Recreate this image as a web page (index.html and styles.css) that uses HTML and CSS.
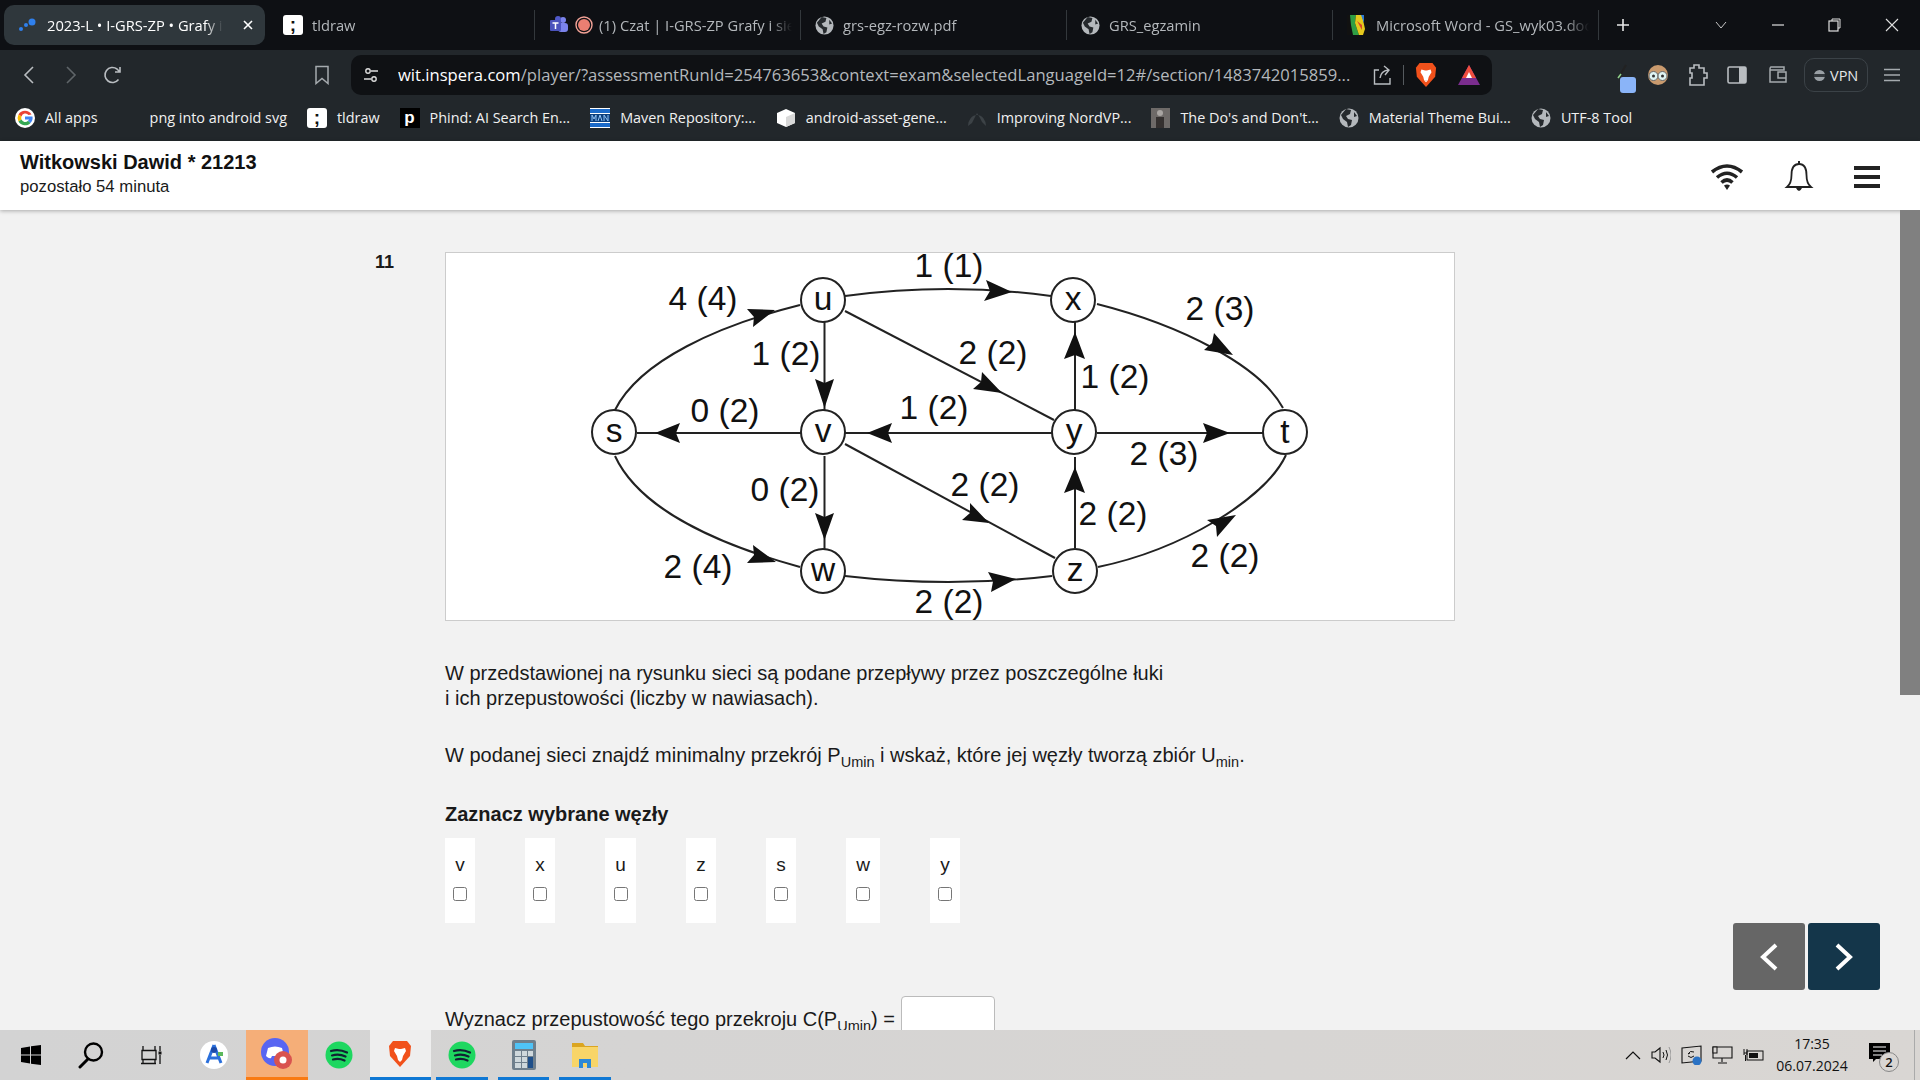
FILE: index.html
```html
<!DOCTYPE html>
<html lang="pl">
<head>
    <meta charset="UTF-8">
    <meta name="viewport" content="width=device-width, initial-scale=1.0">
    <title>Inspera player</title>
    <link rel="stylesheet" href="styles.css">
</head>
<body>
    <svg class="defs" width="0" height="0">
        <symbol id="globe" viewBox="0 0 20 20">
            <circle cx="10" cy="10" r="9.5" fill="#b4b8bc"/>
            <path d="M7 1 L12 2 L11 6 L7 8 L9 11 L13 12 L12 17 L9 19 L8 14 L4 11 L2 7 Z" fill="#25292d"/>
            <path d="M15 4 L18 8 L15 9 Z" fill="#25292d"/>
        </symbol>
        <symbol id="spotify" viewBox="0 0 28 28">
            <ellipse cx="14" cy="14" rx="13.5" ry="13.5" fill="#1ed760"/>
            <path d="M6 10 Q14 7.5 22 11.5 M7 14.5 Q14 12.5 20.5 15.5 M8 18.5 Q14 17 19.5 19.5" fill="none" stroke="#123" stroke-width="2.2" stroke-linecap="round"/>
        </symbol>
        <symbol id="brave" viewBox="0 0 24 28">
            <path d="M5 1 H19 L23 6 L22 16 L12 27 L2 16 L1 6 Z" fill="#f1511b"/>
            <path d="M7 8 L11 9 H13 L17 8 L18 11 L15 16 L14 20 H10 L9 16 L6 11 Z" fill="#fff"/>
            <path d="M10 20 L12 22 L14 20 Z" fill="#fff"/>
        </symbol>
    </svg>

    <div class="tabstrip">
        <div class="tab tab-active">
            <svg class="fav" width="18" height="18" viewBox="0 0 18 18"><circle cx="3" cy="13" r="2" fill="#2f80ed"/><circle cx="8" cy="9" r="2" fill="#2f80ed"/><circle cx="14" cy="6" r="3.5" fill="#2f80ed"/></svg>
            <span class="tab-title">2023-L • I-GRS-ZP • Grafy i sieci</span>
            <svg class="tab-close" width="12" height="12" viewBox="0 0 12 12"><path d="M2 2 L10 10 M10 2 L2 10" stroke="#fff" stroke-width="1.6"/></svg>
        </div>
        <div class="tab">
            <span class="fav fav-tldraw">;</span>
            <span class="tab-title">tldraw</span>
        </div>
        <div class="tab tab-tight">
            <svg class="fav" width="20" height="20" viewBox="0 0 20 20"><circle cx="14" cy="5" r="3" fill="#7b83eb"/><rect x="9" y="8" width="10" height="9" rx="3" fill="#7b83eb"/><circle cx="9" cy="4" r="3" fill="#5059c9"/><rect x="1" y="5" width="11" height="11" rx="1" fill="#4b53bc"/><path d="M3.5 8 H9.5 M6.5 8 V14" stroke="#fff" stroke-width="1.5"/></svg>
            <svg class="fav" width="18" height="18" viewBox="0 0 18 18"><circle cx="9" cy="9" r="8" fill="none" stroke="#f2a297" stroke-width="1.4"/><circle cx="9" cy="9" r="6" fill="#ea7f72"/></svg>
            <span class="tab-title">(1) Czat | I-GRS-ZP Grafy i sieci</span>
        </div>
        <div class="tab">
            <svg class="fav" width="19" height="19"><use href="#globe"/></svg>
            <span class="tab-title">grs-egz-rozw.pdf</span>
        </div>
        <div class="tab">
            <svg class="fav" width="19" height="19"><use href="#globe"/></svg>
            <span class="tab-title">GRS_egzamin</span>
        </div>
        <div class="tab">
            <svg class="fav" width="20" height="20" viewBox="0 0 20 20"><rect width="20" height="20" fill="#111"/><path d="M3 0 H9 L8 8 L12 20 H6 L4 10 Z" fill="#2f9e44"/><path d="M9 0 H15 L18 14 L16 20 H12 L8 8 Z" fill="#e5c81d"/><path d="M14 0 H17 L17 8 Z" fill="#2c7bd6"/><path d="M10 6 L15 10 L15 15 Z" fill="#d9442c"/></svg>
            <span class="tab-title">Microsoft Word - GS_wyk03.doc</span>
        </div>
        <svg class="new-tab" width="16" height="16" viewBox="0 0 16 16"><path d="M8 2 V14 M2 8 H14" stroke="#e8e8e8" stroke-width="1.6"/></svg>
        <div class="win-controls">
            <div class="win-btn"><svg width="12" height="8" viewBox="0 0 12 8"><path d="M1 1 L6 7 L11 1" fill="none" stroke="#c8c8c8"/></svg></div>
            <div class="win-btn"><svg width="12" height="12" viewBox="0 0 12 12"><path d="M0 6 H12" stroke="#e0e0e0" stroke-width="1.2"/></svg></div>
            <div class="win-btn"><svg width="13" height="14" viewBox="0 0 13 14"><rect x="1" y="3" width="9" height="10" fill="none" stroke="#e0e0e0" stroke-width="1.2"/><path d="M4 3 V1 H12 V10 H10" fill="none" stroke="#e0e0e0"/></svg></div>
            <div class="win-btn"><svg width="14" height="14" viewBox="0 0 14 14"><path d="M1 1 L13 13 M13 1 L1 13" stroke="#e0e0e0" stroke-width="1.1"/></svg></div>
        </div>
    </div>

    <div class="toolbar">
        <div class="nav-tools">
            <div class="tool"><svg width="12" height="20" viewBox="0 0 12 20"><path d="M10 2 L2 10 L10 18" fill="none" stroke="#b9bdc1" stroke-width="1.6"/></svg></div>
            <div class="tool"><svg width="12" height="20" viewBox="0 0 12 20"><path d="M2 2 L10 10 L2 18" fill="none" stroke="#5f6569" stroke-width="1.6"/></svg></div>
            <div class="tool"><svg width="20" height="20" viewBox="0 0 20 20"><path d="M15.5 14.5 A7.5 7.5 0 1 1 14 4 L17 7 M17 2 V7 H12" fill="none" stroke="#b9bdc1" stroke-width="1.6"/></svg></div>
            <div class="tool tool-end"><svg width="16" height="20" viewBox="0 0 16 20"><path d="M2 1.500 H14 V18.500 L8 13.500 L2 18.500 Z" fill="none" stroke="#a5aaae" stroke-width="1.5"/></svg></div>
        </div>
        <div class="urlbar">
            <svg class="url-tune" width="16" height="16" viewBox="0 0 16 16"><circle cx="5" cy="4" r="2.200" fill="none" stroke="#ddd" stroke-width="1.400"/><path d="M8 4 H15 M1 12 H8" stroke="#ddd" stroke-width="1.400"/><circle cx="11" cy="12" r="2.200" fill="none" stroke="#ddd" stroke-width="1.400"/></svg>
            <span class="url-text"><span class="url-host">wit.inspera.com</span>/player/?assessmentRunId=254763653&amp;context=exam&amp;selectedLanguageId=12#/section/1483742015859...</span>
            <svg class="url-share" width="20" height="22" viewBox="0 0 20 22"><path d="M6 6 H1.500 V20 H17 V14 M7 14 Q8 7 15 6 M11 2 L16 6 L12 11" fill="none" stroke="#b9bdc1" stroke-width="1.400"/></svg>
            <span class="url-sep"></span>
            <svg class="url-brave" width="22" height="26"><use href="#brave"/></svg>
            <svg class="url-triangle" width="24" height="22" viewBox="0 0 24 22"><path d="M12 1 L23 21 H1 Z" fill="#7b2d8e"/><path d="M12 1 L19 14 H5 Z" fill="#f04e3e"/><path d="M12 8 L15 14 H9 Z" fill="#fff"/></svg>
        </div>
        <div class="ext-tools">
            <svg class="ext-pen" width="22" height="30" viewBox="0 0 22 30"><path d="M4 14 L11 2" stroke="#222" stroke-width="2"/><path d="M3 15 L6 11" stroke="#8fd18a" stroke-width="1.500"/><rect x="5" y="14" width="16" height="16" rx="3" fill="#8ab4f8"/></svg>
            <svg class="ext-face" width="22" height="24" viewBox="0 0 22 24"><circle cx="11" cy="12" r="10" fill="#c99a6e"/><circle cx="6.500" cy="13" r="4.500" fill="#dff3f2" stroke="#666"/><circle cx="15.500" cy="13" r="4.500" fill="#dff3f2" stroke="#666"/><circle cx="6.500" cy="13" r="1.500" fill="#333"/><circle cx="15.500" cy="13" r="1.500" fill="#333"/></svg>
            <svg class="ext-puzzle" width="22" height="24" viewBox="0 0 22 24"><path d="M4 5 H8 V2 H13 V5 H18 V10 H21 V15 H18 V22 H4 V15 H6 V10 H4 Z" fill="none" stroke="#b9bdc1" stroke-width="1.600"/></svg>
            <svg class="ext-side" width="20" height="20" viewBox="0 0 20 20"><rect x="1" y="2" width="18" height="16" rx="1.500" fill="none" stroke="#b9bdc1" stroke-width="1.600"/><rect x="12" y="2" width="7" height="16" fill="#b9bdc1"/></svg>
            <svg class="ext-wallet" width="20" height="20" viewBox="0 0 20 20"><path d="M2 5 H16 V2 H3 Q2 2 2 5 V17 H18 V7 H10 V13 H18" fill="none" stroke="#a5aaae" stroke-width="1.500"/></svg>
            <div class="vpn"><span class="vpn-dot"></span>VPN</div>
            <svg class="ext-menu" width="18" height="14" viewBox="0 0 18 14"><path d="M1 1.500 H17 M1 7 H17 M1 12.500 H17" stroke="#a5aaae" stroke-width="1.500"/></svg>
        </div>
    </div>

    <div class="bookmarks">
        <div class="bm">
            <svg class="bm-icon" width="20" height="20" viewBox="0 0 20 20"><circle cx="10" cy="10" r="10" fill="#fff"/><path d="M16.500 6.500 A7.500 7.500 0 0 0 3.500 6.500 L6.500 8.500 A4 4 0 0 1 13.500 7 Z" fill="#ea4335"/><path d="M3.500 6.500 A7.500 7.500 0 0 0 3.500 13.500 L6.500 11.500 A4 4 0 0 1 6.500 8.500 Z" fill="#fbbc05"/><path d="M3.500 13.500 A7.500 7.500 0 0 0 15.500 15 L13 12.800 A4 4 0 0 1 6.500 11.500 Z" fill="#34a853"/><path d="M10 8.500 H17.500 A7.500 7.500 0 0 1 15.500 15 L13 12.800 Q13.800 12 14 11.500 H10 Z" fill="#4285f4"/></svg>
            <span>All apps</span>
        </div>
        <div class="bm"><span class="bm-blank"></span><span>png into android svg</span></div>
        <div class="bm"><span class="bm-icon fav-tldraw">;</span><span>tldraw</span></div>
        <div class="bm"><span class="bm-icon fav-phind">p</span><span>Phind: AI Search En...</span></div>
        <div class="bm">
            <svg class="bm-icon" width="20" height="20" viewBox="0 0 20 20"><rect width="20" height="20" fill="#fff"/><rect y="1" width="20" height="4" fill="#1b6ac9"/><rect y="15" width="20" height="4" fill="#1b6ac9"/><rect y="6" width="20" height="8" fill="#0c3f7d"/><path d="M2 13 V7 L4 11 L6 7 V13 M8 13 L10 7 L12 13 M14 13 V7 L18 13 V7" stroke="#8fc1f5" fill="none"/></svg>
            <span>Maven Repository:...</span>
        </div>
        <div class="bm">
            <svg class="bm-icon" width="20" height="20" viewBox="0 0 20 20"><path d="M10 1 L19 5 V15 L10 19 L1 15 V5 Z" fill="#fff"/><path d="M10 9 L19 5 V15 L10 19 Z" fill="#d8d8d8"/></svg>
            <span>android-asset-gene...</span>
        </div>
        <div class="bm">
            <svg class="bm-icon" width="20" height="20" viewBox="0 0 20 20"><path d="M1 18 A9 11 0 0 1 19 18 L15 14 L13 10 L10 5 L7 11 L5 15 Z" fill="#3c4246"/></svg>
            <span>Improving NordVP...</span>
        </div>
        <div class="bm">
            <svg class="bm-icon" width="19" height="20" viewBox="0 0 19 20"><rect width="19" height="20" fill="#6e6a68"/><circle cx="9" cy="5" r="3" fill="#a9a5a2"/><rect x="5" y="9" width="8" height="11" fill="#34302f"/></svg>
            <span>The Do's and Don't...</span>
        </div>
        <div class="bm"><svg class="bm-icon" width="20" height="20"><use href="#globe"/></svg><span>Material Theme Bui...</span></div>
        <div class="bm"><svg class="bm-icon" width="20" height="20"><use href="#globe"/></svg><span>UTF-8 Tool</span></div>
    </div>

    <div class="app">
        <header class="app-header">
            <div>
                <div class="student">Witkowski Dawid * 21213</div>
                <div class="time-left">pozostało 54 minuta</div>
            </div>
            <div class="header-icons">
                <svg width="34" height="28" viewBox="0 0 34 28"><path d="M2 9 Q17 -3 32 9 M7 14.500 Q17 6 27 14.500 M11.500 19.500 Q17 14.500 22.500 19.500" fill="none" stroke="#222" stroke-width="3.600"/><path d="M14 22.500 L17 27 L20 22.500 Q17 20.500 14 22.500 Z" fill="#222"/></svg>
                <svg width="30" height="32" viewBox="0 0 30 32"><path d="M15 3 C9 3 7.500 9 7.500 14 C7.500 20 5.500 24 3 26 H27 C24.500 24 22.500 20 22.500 14 C22.500 9 21 3 15 3 Z" fill="none" stroke="#222" stroke-width="1.800"/><path d="M15 0 V3" stroke="#222" stroke-width="2"/><path d="M12 27 Q15 33 18 27 Z" fill="#222"/></svg>
                <svg width="26" height="24" viewBox="0 0 26 24"><path d="M0 3 H26 M0 12 H26 M0 21 H26" stroke="#222" stroke-width="4.200"/></svg>
            </div>
        </header>

        <div class="workspace">
            <main class="question">
                <div class="question-number">11</div>
                <div class="question-body">
                    <div class="figure">
                        <svg class="graph" width="1008" height="367" viewBox="446 253 1008 367">
                            <g fill="none" stroke="#222" stroke-width="2">
                                <path d="M615 410 C 640 360, 720 325, 800 305"/>
                                <path d="M845 296 Q 948 282 1051 296"/>
                                <path d="M1097 304 C 1180 325, 1260 365, 1283 408"/>
                                <path d="M615 456 C 640 510, 720 545, 800 567"/>
                                <path d="M845 576 Q 948 588 1052 576"/>
                                <path d="M1098 567 C 1180 550, 1265 500, 1286 455"/>
                                <path d="M824.500 322 V410"/>
                                <path d="M824.500 456 V550"/>
                                <path d="M637 433 H802"/>
                                <path d="M845 433 H1052"/>
                                <path d="M1097 433 H1263"/>
                                <path d="M1075 411 V322"/>
                                <path d="M1075 548 V457"/>
                                <path d="M845 311 L1054 420"/>
                                <path d="M845 444 L1055 558"/>
                            </g>
                            <g fill="#111">
                                <path d="M775 310 L747 309 L754 317 L753 327 Z"/>
                                <path d="M1012 292 L986 280 L990 291 L984 301 Z"/>
                                <path d="M1233 355 L1214 333 L1212 343 L1204 350 Z"/>
                                <path d="M776 562 L753 545 L754 555 L747 563 Z"/>
                                <path d="M1016 579 L988 572 L993 581.500 L991 592 Z"/>
                                <path d="M1236 515 L1207 520 L1216 526 L1217 537 Z"/>
                                <path d="M824.500 408 L815 379 L824.500 383 L834 379 Z"/>
                                <path d="M824.500 540 L815 513 L824.500 517 L834 513 Z"/>
                                <path d="M655 433 L680 423 L676 433 L680 443 Z"/>
                                <path d="M867 433 L892 423 L888 433 L892 443 Z"/>
                                <path d="M1230 433 L1203 423 L1207 433 L1203 443 Z"/>
                                <path d="M1075 332 L1064 359 L1075 355 L1085 359 Z"/>
                                <path d="M1075 467 L1064 493 L1075 489 L1085 493 Z"/>
                                <path d="M1002 393 L982 372 L981 382 L973 389 Z"/>
                                <path d="M989 523 L970 503 L970 513 L962 520 Z"/>
                            </g>
                            <g fill="#fff" stroke="#222" stroke-width="2">
                                <circle cx="823" cy="300" r="22"/>
                                <circle cx="1073" cy="300" r="22"/>
                                <circle cx="614" cy="432" r="22"/>
                                <circle cx="823" cy="432" r="22"/>
                                <circle cx="1074" cy="432" r="22"/>
                                <circle cx="1285" cy="432" r="22"/>
                                <circle cx="823" cy="571" r="22"/>
                                <circle cx="1075" cy="571" r="22"/>
                            </g>
                            <g class="graph-nodes" text-anchor="middle">
                                <text x="823" y="310">u</text>
                                <text x="1073" y="310">x</text>
                                <text x="614" y="442">s</text>
                                <text x="823" y="442">v</text>
                                <text x="1074" y="442">y</text>
                                <text x="1285" y="443">t</text>
                                <text x="823" y="581">w</text>
                                <text x="1075" y="581">z</text>
                            </g>
                            <g class="graph-labels" text-anchor="middle">
                                <text x="949" y="277">1 (1)</text>
                                <text x="703" y="310">4 (4)</text>
                                <text x="1220" y="320">2 (3)</text>
                                <text x="786" y="365">1 (2)</text>
                                <text x="993" y="364">2 (2)</text>
                                <text x="1115" y="388">1 (2)</text>
                                <text x="725" y="422">0 (2)</text>
                                <text x="934" y="419">1 (2)</text>
                                <text x="1164" y="465">2 (3)</text>
                                <text x="785" y="501">0 (2)</text>
                                <text x="985" y="496">2 (2)</text>
                                <text x="1113" y="525">2 (2)</text>
                                <text x="698" y="578">2 (4)</text>
                                <text x="1225" y="567">2 (2)</text>
                                <text x="949" y="613">2 (2)</text>
                            </g>
                        </svg>
                    </div>

                    <p class="intro">W przedstawionej na rysunku sieci są podane przepływy przez poszczególne łuki<br>i ich przepustowości (liczby w nawiasach).</p>
                    <p class="instruction">W podanej sieci znajdź minimalny przekrój P<sub>Umin</sub> i wskaż, które jej węzły tworzą zbiór U<sub>min</sub>.</p>
                    <h3 class="pick-title">Zaznacz wybrane węzły</h3>
                    <div class="options">
                        <label class="option">v<input type="checkbox"></label>
                        <label class="option">x<input type="checkbox"></label>
                        <label class="option option-mid">u<input type="checkbox"></label>
                        <label class="option">z<input type="checkbox"></label>
                        <label class="option">s<input type="checkbox"></label>
                        <label class="option option-wide">w<input type="checkbox"></label>
                        <label class="option">y<input type="checkbox"></label>
                    </div>
                    <div class="capacity">
                        <span class="capacity-text">Wyznacz przepustowość tego przekroju C(P<sub>Umin</sub>) =</span>
                        <input class="capacity-input" type="text">
                    </div>
                </div>
            </main>
            <div class="scrollbar"><div class="scroll-thumb"></div></div>
            <div class="pager">
                <button class="pager-btn pager-prev"><svg width="22" height="30" viewBox="0 0 22 30"><path d="M18 3 L5 15 L18 27" fill="none" stroke="#fff" stroke-width="4"/></svg></button>
                <button class="pager-btn pager-next"><svg width="22" height="30" viewBox="0 0 22 30"><path d="M4 3 L17 15 L4 27" fill="none" stroke="#fff" stroke-width="4"/></svg></button>
            </div>
        </div>
    </div>

    <footer class="taskbar">
        <div class="task"><svg width="20" height="20" viewBox="0 0 20 20"><path d="M0 3 L9 1.500 V9.500 H0 Z M10 1.300 L20 0 V9.500 H10 Z M0 10.500 H9 V18.500 L0 17 Z M10 10.500 H20 V20 L10 18.700 Z" fill="#000"/></svg></div>
        <div class="task"><svg width="28" height="28" viewBox="0 0 28 28"><circle cx="16.500" cy="11" r="8.500" fill="none" stroke="#000" stroke-width="2.400"/><path d="M11 18 L3 26" stroke="#000" stroke-width="3" stroke-linecap="round"/></svg></div>
        <div class="task"><svg width="22" height="20" viewBox="0 0 22 20"><path d="M2 1 V5 M14 1 V5 M2 15 V19 M14 15 V19 M1 5.500 H15 V14.500 H1 Z M0 18.500 H15 M19 1 V6 M19 10 V19" fill="none" stroke="#111" stroke-width="1.300"/><rect x="17.500" y="6.500" width="3" height="3" fill="#111"/></svg></div>
        <div class="task"><svg width="30" height="30" viewBox="0 0 30 30"><circle cx="15" cy="15" r="14" fill="#fff"/><path d="M15 5 L8 23 M15 5 L22 23 M10 18 H20" stroke="#2a6fdb" stroke-width="3"/><circle cx="15" cy="10" r="3" fill="#1c4aa8"/><rect x="19" y="12" width="5" height="4" fill="#5cb85c"/></svg></div>
        <div class="task task-alert">
            <svg width="32" height="32" viewBox="0 0 32 32"><ellipse cx="14" cy="14" rx="14" ry="14" fill="#5865f2"/><path d="M7 10 Q14 7 21 10 L23 18 Q20 21 18 20 L17 18 H11 L10 20 Q8 21 5 18 Z" fill="#fff"/><circle cx="22" cy="22" r="9" fill="#d9534f"/><circle cx="22" cy="22" r="3.500" fill="#fff"/></svg>
        </div>
        <div class="task"><svg width="28" height="30"><use href="#spotify"/></svg></div>
        <div class="task task-active"><svg width="24" height="30"><use href="#brave"/></svg></div>
        <div class="task task-open"><svg width="28" height="30"><use href="#spotify"/></svg></div>
        <div class="task task-open">
            <svg width="24" height="30" viewBox="0 0 24 30"><rect width="24" height="30" rx="2" fill="#6f7f8c"/><rect x="3" y="3" width="18" height="6" fill="#4fc3f7"/><path d="M3 11 H9 V16 H3 Z M10 11 H15 V16 H10 Z M16 11 H21 V16 H16 Z M3 17 H9 V22 H3 Z M10 17 H15 V22 H10 Z M3 23 H9 V28 H3 Z M10 23 H15 V28 H10 Z" fill="#cfd8dc"/><rect x="16" y="17" width="5" height="11" fill="#1e4f8a"/></svg>
        </div>
        <div class="task task-open">
            <svg width="28" height="28" viewBox="0 0 28 28"><path d="M1 2 H12 L14 5 H27 V26 H1 Z" fill="#dba520"/><rect x="1" y="6" width="26" height="20" fill="#f8d568"/><path d="M8 27 V18 H20 V27 H16 V22 H12 V27 Z" fill="#2b88d8"/></svg>
        </div>

        <div class="tray">
            <svg class="tray-icon" width="16" height="10" viewBox="0 0 16 10"><path d="M1 9 L8 2 L15 9" fill="none" stroke="#111" stroke-width="1.200"/></svg>
            <svg class="tray-icon" width="20" height="18" viewBox="0 0 20 18"><path d="M1 6 H4 L9 2 V16 L4 12 H1 Z" fill="none" stroke="#111" stroke-width="1.100"/><path d="M12 6 Q14 9 12 12" fill="none" stroke="#111"/><path d="M15 4 Q18 9 15 14" fill="none" stroke="#111"/><path d="M18 1 Q22 9 18 17" fill="none" stroke="#999"/></svg>
            <svg class="tray-icon" width="21" height="20" viewBox="0 0 21 20"><path d="M1 3 L20 1 V16 L1 18 Z" fill="none" stroke="#111" stroke-width="1.100"/><path d="M13 7 Q9 5 7 9 L9 8 M7 11 Q10 14 13 11" fill="none" stroke="#111"/><circle cx="16" cy="16" r="4.500" fill="#2a72c4"/></svg>
            <svg class="tray-icon" width="21" height="18" viewBox="0 0 21 18"><path d="M1 1 H20 V12 H1 Z M10 12 V16 M6 17 H15" fill="none" stroke="#111" stroke-width="1.100"/><rect x="1" y="1" width="4" height="6" fill="#d9d6d3" stroke="#111"/></svg>
            <svg class="tray-icon" width="21" height="16" viewBox="0 0 21 16"><rect x="4" y="4" width="16" height="9" fill="none" stroke="#111"/><rect x="6" y="6" width="9" height="5" fill="#111"/><path d="M1 2 V8 M4 2 V8 M1 6 H4 M2.500 8 V14" stroke="#111"/></svg>
            <div class="clock"><div>17:35</div><div>06.07.2024</div></div>
            <div class="notify">
                <svg width="21" height="19" viewBox="0 0 21 19"><path d="M0 0 H21 V16 H7 L4 19 V16 H0 Z" fill="#000"/><path d="M4 4 H17 M4 8 H17 M4 12 H13" stroke="#fff"/></svg>
                <span class="notify-count">2</span>
            </div>
        </div>
    </footer>
</body>
</html>
```

FILE: styles.css
```css
* {
    box-sizing: border-box;
}

html, body {
    margin: 0;
    height: 100%;
}

body {
    display: flex;
    flex-direction: column;
    height: 1080px;
    overflow: hidden;
    font-family: "Liberation Sans", Arial, sans-serif;
    color: #1a1a1a;
    background-color: #f2f2f2;
}

.defs {
    position: absolute;
}

/* browser chrome */
.tabstrip {
    display: flex;
    align-items: center;
    flex: 0 0 50px;
    padding-left: 4px;
    background-color: #0e1014;
    font-family: "Open Sans", sans-serif;
    font-size: 14.7px;
    color: #b4b8bc;
}

.tab {
    display: flex;
    align-items: center;
    flex: 0 0 266px;
    height: 30px;
    padding-left: 14px;
    gap: 9px;
    border-right: 1px solid #33383c;
    overflow: hidden;
}

.tab-tight {
    gap: 6px;
}

.tab-active {
    flex-basis: 261px;
    height: 40px;
    margin-right: 4px;
    border: none;
    border-radius: 10px;
    background-color: #2f373c;
    color: #fff;
}

.fav {
    flex: none;
}

.tab-title {
    flex: 1;
    padding-right: 10px;
    white-space: nowrap;
    overflow: hidden;
    -webkit-mask-image: linear-gradient(to right, #000 85%, transparent 96%);
    mask-image: linear-gradient(to right, #000 85%, transparent 96%);
}

.tab-active .tab-title {
    flex: none;
    width: 176px;
    margin-left: 2px;
    padding-right: 0;
    -webkit-mask-image: linear-gradient(to right, #000 90%, transparent);
    mask-image: linear-gradient(to right, #000 90%, transparent);
}

.tab-close {
    flex: none;
    margin-left: 10px;
}

.fav-tldraw {
    display: flex;
    align-items: center;
    justify-content: center;
    width: 20px;
    height: 20px;
    border-radius: 3px;
    background-color: #fff;
    color: #111;
    font-family: "Liberation Sans", sans-serif;
    font-size: 19px;
    font-weight: bold;
}

.new-tab {
    margin-left: 16px;
}

.win-controls {
    display: flex;
    margin-left: auto;
}

.win-btn {
    display: flex;
    align-items: center;
    justify-content: center;
    width: 57px;
    height: 40px;
}

.toolbar {
    display: flex;
    align-items: center;
    flex: 0 0 50px;
    padding-left: 8px;
    background-color: #22272b;
}

.nav-tools {
    display: flex;
    width: 343px;
}

.tool {
    display: flex;
    align-items: center;
    justify-content: center;
    width: 42px;
    height: 40px;
}

.tool-end {
    margin-left: auto;
    margin-right: 8px;
}

.urlbar {
    display: flex;
    align-items: center;
    flex: 0 0 1141px;
    height: 40px;
    padding-left: 12px;
    border-radius: 10px;
    background-color: #0f1114;
    font-family: "Open Sans", sans-serif;
    font-size: 16.6px;
    color: #b4b8bc;
}

.url-text {
    flex: 0 0 966px;
    margin: 0 0 2px 19px;
    white-space: nowrap;
    overflow: hidden;
}

.url-host {
    color: #fff;
}

.url-share {
    margin-left: 9px;
}

.url-sep {
    width: 1px;
    height: 20px;
    margin-left: 10px;
    background-color: #555a5e;
}

.url-brave {
    margin-left: 11px;
}

.url-triangle {
    margin-left: 20px;
}

.ext-tools {
    display: flex;
    align-items: center;
    margin-left: auto;
    padding-right: 19px;
}

.ext-pen {
    margin-top: 5px;
}

.ext-face {
    margin-left: 10px;
}

.ext-puzzle {
    margin-left: 17px;
}

.ext-side {
    margin-left: 19px;
}

.ext-wallet {
    margin-left: 21px;
}

.vpn {
    display: flex;
    align-items: center;
    gap: 5px;
    width: 64px;
    height: 34px;
    margin-left: 16px;
    padding-left: 9px;
    border: 1px solid #3b4247;
    border-radius: 10px;
    font-family: "Open Sans", sans-serif;
    font-size: 14.5px;
    color: #e4e6e8;
}

.vpn-dot {
    flex: none;
    width: 11px;
    height: 11px;
    border-radius: 50%;
    background: linear-gradient(#9aa0a5 40%, #33383c 40%, #33383c 60%, #9aa0a5 60%);
}

.ext-menu {
    margin-left: 15px;
}

.bookmarks {
    display: flex;
    align-items: center;
    flex: 0 0 41px;
    padding: 0 0 6px 15px;
    gap: 20px;
    background-color: #22272b;
    font-family: "Open Sans", sans-serif;
    font-size: 14.4px;
    color: #f1f1f1;
}

.bm {
    display: flex;
    align-items: center;
    gap: 10px;
    white-space: nowrap;
}

.bm-icon {
    flex: none;
}

.bm-blank {
    width: 22px;
}

.fav-phind {
    display: flex;
    align-items: center;
    justify-content: center;
    width: 20px;
    height: 20px;
    background-color: #000;
    color: #fff;
    font-family: "Liberation Sans", sans-serif;
    font-size: 17px;
    font-weight: bold;
}

/* exam app */
.app {
    display: flex;
    flex-direction: column;
    flex: 1;
    min-height: 0;
}

.app-header {
    display: flex;
    justify-content: space-between;
    flex: 0 0 69px;
    padding: 8px 40px 0 20px;
    background-color: #fff;
    box-shadow: 0 1px 4px rgba(0, 0, 0, 0.3);
    position: relative;
}

.student {
    font-size: 20px;
    font-weight: bold;
    line-height: 27px;
    color: #111;
}

.time-left {
    font-size: 16.7px;
    line-height: 21px;
}

.header-icons {
    display: flex;
    align-items: center;
    gap: 40px;
    padding-bottom: 6px;
}

.workspace {
    display: flex;
    flex: 1;
    min-height: 0;
    position: relative;
    overflow: hidden;
}

.question {
    display: flex;
    flex: 1;
    padding: 42px 0 0 375px;
    font-size: 20px;
    line-height: 25px;
}

.question-number {
    flex: 0 0 70px;
    font-weight: bold;
    font-size: 18px;
    line-height: 20px;
}

.figure {
    width: 1010px;
    height: 369px;
    border: 1px solid #ccc;
    background-color: #fff;
}

.graph {
    display: block;
}

.graph text {
    font-family: "Liberation Sans", Arial, sans-serif;
    font-size: 33.5px;
    fill: #111;
}

.intro {
    margin: 40px 0 0;
}

.instruction {
    margin: 32px 0 0;
}

sub {
    font-size: 14.5px;
    line-height: 0;
}

.pick-title {
    margin: 34px 0 0;
    font-size: 20px;
    line-height: 25px;
}

.options {
    display: flex;
    gap: 50px;
    margin-top: 11px;
}

.option {
    display: flex;
    flex-direction: column;
    align-items: center;
    width: 30px;
    height: 85px;
    padding-top: 14px;
    gap: 10px;
    background-color: #fff;
    font-size: 19px;
    line-height: 25px;
}

.option-mid {
    width: 31px;
}

.option-wide {
    width: 34px;
}

.option input {
    width: 14px;
    height: 14px;
    margin: 0;
}

.capacity {
    display: flex;
    align-items: flex-start;
    gap: 6px;
    margin-top: 73px;
}

.capacity-text {
    margin-top: 11px;
}

.capacity-input {
    width: 94px;
    height: 44px;
    border: 1px solid #bbb;
    border-radius: 4px;
    background-color: #fff;
}

.scrollbar {
    flex: 0 0 20px;
    background-color: #f1f1f1;
}

.scroll-thumb {
    height: 485px;
    background-color: #808080;
}

.pager {
    display: flex;
    gap: 3px;
    position: absolute;
    top: 713px;
    right: 40px;
}

.pager-btn {
    display: flex;
    align-items: center;
    justify-content: center;
    width: 72px;
    height: 67px;
    border: none;
    border-radius: 3px;
}

.pager-prev {
    background-color: #666;
}

.pager-next {
    background-color: #14364a;
}

/* windows taskbar */
.taskbar {
    display: flex;
    flex: 0 0 50px;
    background: linear-gradient(to right, #d3d3d3, #d9d6d3);
    font-family: "Open Sans", sans-serif;
}

.task {
    display: flex;
    align-items: center;
    justify-content: center;
    flex: 0 0 61.6px;
    position: relative;
}

.task:nth-child(2) {
    padding-right: 2px;
}

.task:nth-child(3), .task:nth-child(4) {
    padding-right: 4px;
}

.task-alert {
    background-color: #f5ae78;
    border-bottom: 3px solid #f97a12;
}

.task-active {
    background-color: #eeeeee;
    border-bottom: 3px solid #0f78d4;
}

.task-open::after {
    content: "";
    position: absolute;
    left: 5px;
    right: 5px;
    bottom: 0;
    height: 3px;
    background-color: #0f78d4;
}

.tray {
    display: flex;
    align-items: center;
    gap: 10px;
    margin-left: auto;
    margin-right: 5px;
    padding-right: 15px;
    border-right: 1px solid #aaa;
}

.tray-icon {
    flex: none;
}

.clock {
    width: 76px;
    text-align: center;
    font-size: 14px;
    line-height: 22px;
    color: #111;
}

.notify {
    width: 32px;
    height: 34px;
    margin-left: 7px;
    padding: 5px 0 0 2px;
    position: relative;
}

.notify-count {
    display: flex;
    align-items: center;
    justify-content: center;
    width: 20px;
    height: 20px;
    position: absolute;
    left: 12px;
    top: 14px;
    border: 1px solid #888;
    border-radius: 50%;
    background-color: #d9d6d3;
    font-size: 13px;
    font-weight: 600;
    color: #111;
}
```
